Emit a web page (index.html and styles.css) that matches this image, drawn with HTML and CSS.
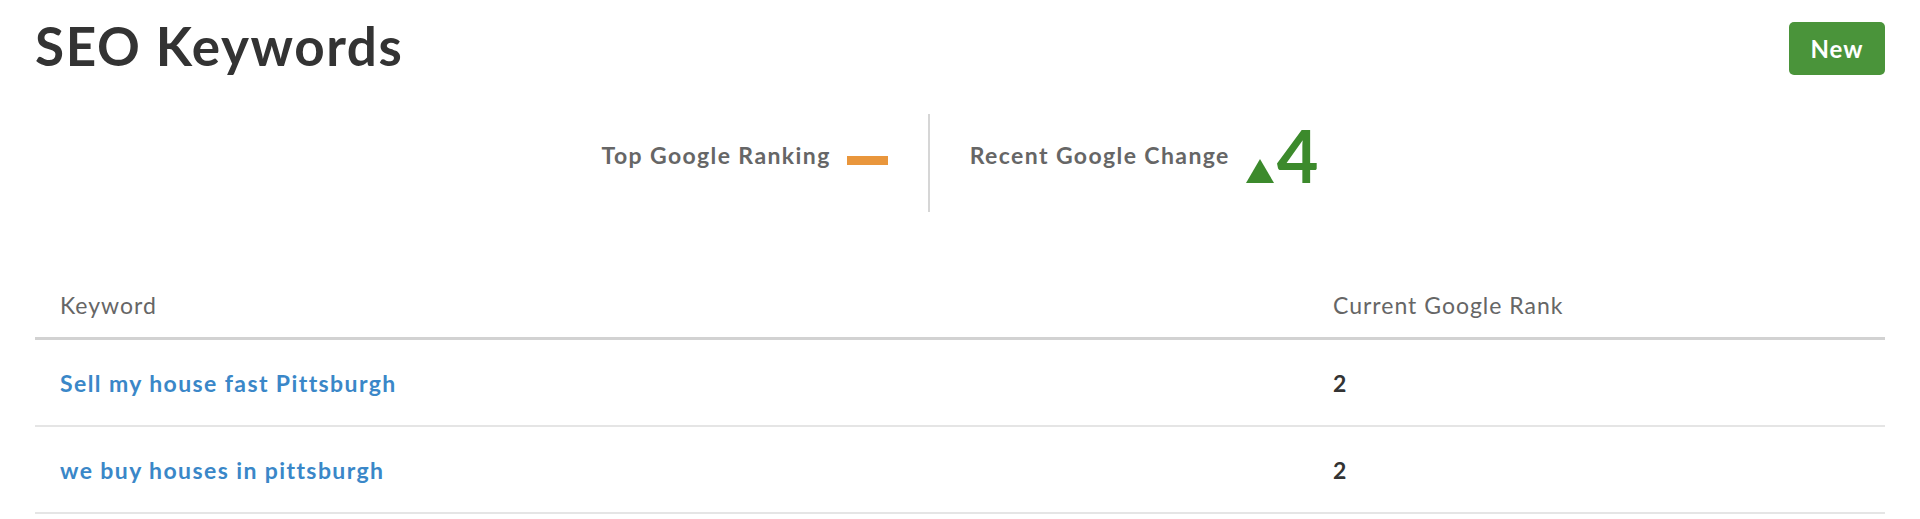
FILE: index.html
```html
<!DOCTYPE html>
<html lang="en">
<head>
<meta charset="utf-8">
<title>SEO Keywords</title>
<link rel="stylesheet" href="styles.css">
</head>
<body>
<main class="page">
  <header class="page-header">
    <h1 class="title">SEO Keywords</h1>
    <button class="btn-new" type="button">New</button>
  </header>

  <section class="stats">
    <div class="stat">
      <span class="stat-label">Top Google Ranking</span>
      <span class="dash"></span>
    </div>
    <div class="divider"></div>
    <div class="stat">
      <span class="stat-label">Recent Google Change</span>
      <span class="change">
        <svg class="tri" width="28" height="24" viewBox="0 0 28 24"><polygon points="14,0 28,24 0,24" fill="#3c8a2c"/></svg>
        <span class="change-num">4</span>
      </span>
    </div>
  </section>

  <table class="kw-table">
    <colgroup><col class="col-kw"><col class="col-rank"></colgroup>
    <thead>
      <tr><th>Keyword</th><th>Current Google Rank</th></tr>
    </thead>
    <tbody>
      <tr><td><a class="kw-link" href="#">Sell my house fast Pittsburgh</a></td><td class="rank">2</td></tr>
      <tr><td><a class="kw-link" href="#">we buy houses in pittsburgh</a></td><td class="rank">2</td></tr>
    </tbody>
  </table>
</main>
</body>
</html>
```

FILE: styles.css
```css
* { box-sizing: border-box; }
html, body { margin: 0; padding: 0; background: #fff; }
body {
  font-family: Lato, "Open Sans", "Liberation Sans", sans-serif;
  color: #333;
}
.page { padding: 0 35px; }

.page-header {
  display: flex;
  justify-content: space-between;
  align-items: flex-start;
  height: 75px;
}
.title {
  margin: 19px 0 0 0;
  font-size: 53px;
  line-height: 53px;
  font-weight: 700;
  color: #333;
  letter-spacing: 1.6px;
}
.btn-new {
  margin-top: 22px;
  width: 96px;
  height: 53px;
  border: 0;
  border-radius: 5px;
  background: #4a943a;
  color: #fff;
  font-family: inherit;
  font-size: 24px;
  font-weight: 700;
  letter-spacing: 1px;
  padding: 0;
}

.stats {
  display: flex;
  justify-content: center;
  align-items: flex-start;
  margin-top: 39px;
}
.stat {
  display: flex;
  align-items: center;
  gap: 16px;
  height: 60px;
  margin-top: 11px;
  padding: 0 40px;
}
.stat-label {
  font-size: 23px;
  line-height: 30px;
  font-weight: 700;
  color: #666;
  letter-spacing: 1.4px;
}
.dash {
  display: block;
  width: 41px;
  height: 9px;
  background: #e9963c;
  margin-top: 11px;
}
.divider {
  width: 2px;
  height: 98px;
  background: #d6d6d6;
}
.change {
  display: flex;
  align-items: baseline;
  gap: 3px;
}
.tri { display: block; }
.change-num {
  font-size: 72px;
  line-height: 60px;
  font-weight: 700;
  color: #3c8a2c;
}

.kw-table {
  width: 100%;
  margin-top: 57px;
  border-collapse: collapse;
  table-layout: fixed;
}
.col-kw { width: 1273px; }
.kw-table th {
  text-align: left;
  font-weight: 400;
  font-size: 23px;
  line-height: 30px;
  color: #666;
  letter-spacing: 1px;
  padding: 21px 25px 17px 25px;
  border-bottom: 3px solid #d2d2d2;
}
.kw-table td {
  font-size: 23px;
  line-height: 30px;
  padding: 28px 25px 27px 25px;
  border-bottom: 2px solid #e5e5e5;
}
.kw-link {
  color: #3a87c8;
  font-weight: 700;
  text-decoration: none;
  letter-spacing: 1.4px;
}
.rank {
  font-weight: 700;
  color: #333;
}
```
